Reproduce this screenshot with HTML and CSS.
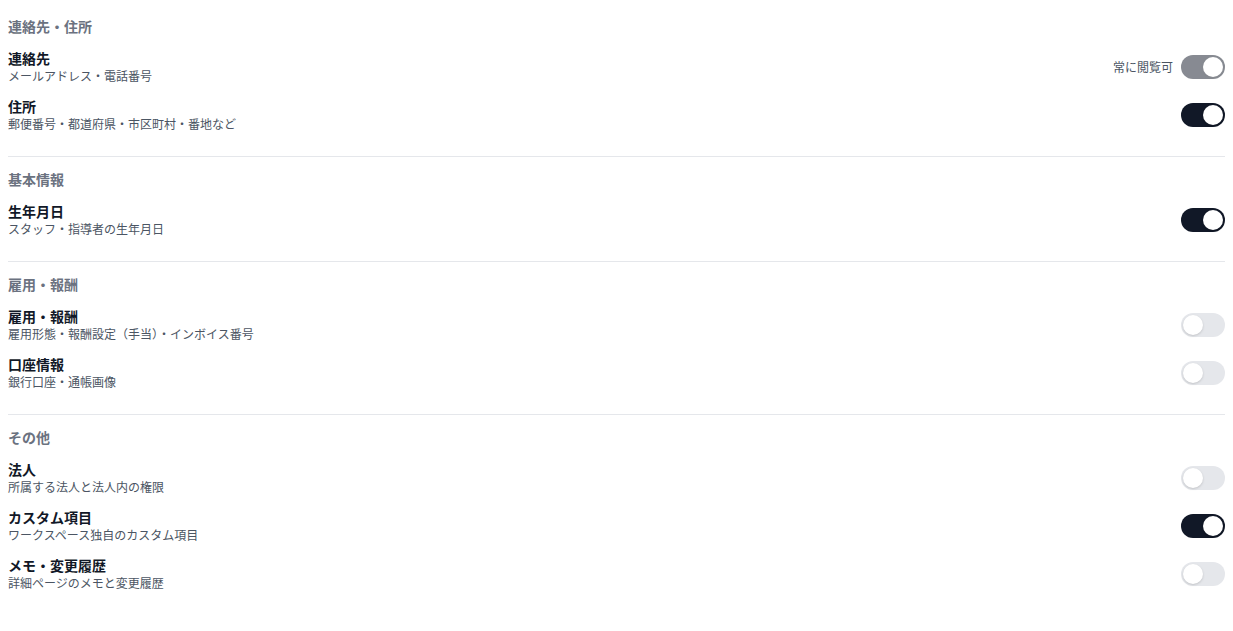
FILE: index.html
```html
<!DOCTYPE html>
<html lang="ja">
<head>
<meta charset="utf-8">
<link rel="stylesheet" href="styles.css">
</head>
<body>
<div class="page">
  <section class="section">
    <h3 class="section-title">連絡先・住所</h3>
    <div class="items">
      <div class="item">
        <div class="item-text"><div class="item-title">連絡先</div><div class="item-sub">メールアドレス・電話番号</div></div>
        <div class="item-ctrl"><span class="always">常に閲覧可</span><span class="toggle on disabled"><span class="knob"></span></span></div>
      </div>
      <div class="item">
        <div class="item-text"><div class="item-title">住所</div><div class="item-sub">郵便番号・都道府県・市区町村・番地など</div></div>
        <div class="item-ctrl"><span class="toggle on"><span class="knob"></span></span></div>
      </div>
    </div>
  </section>
  <section class="section">
    <h3 class="section-title">基本情報</h3>
    <div class="items">
      <div class="item">
        <div class="item-text"><div class="item-title">生年月日</div><div class="item-sub">スタッフ・指導者の生年月日</div></div>
        <div class="item-ctrl"><span class="toggle on"><span class="knob"></span></span></div>
      </div>
    </div>
  </section>
  <section class="section">
    <h3 class="section-title">雇用・報酬</h3>
    <div class="items">
      <div class="item">
        <div class="item-text"><div class="item-title">雇用・報酬</div><div class="item-sub">雇用形態・報酬設定（手当）・インボイス番号</div></div>
        <div class="item-ctrl"><span class="toggle"><span class="knob"></span></span></div>
      </div>
      <div class="item">
        <div class="item-text"><div class="item-title">口座情報</div><div class="item-sub">銀行口座・通帳画像</div></div>
        <div class="item-ctrl"><span class="toggle"><span class="knob"></span></span></div>
      </div>
    </div>
  </section>
  <section class="section last">
    <h3 class="section-title">その他</h3>
    <div class="items">
      <div class="item">
        <div class="item-text"><div class="item-title">法人</div><div class="item-sub">所属する法人と法人内の権限</div></div>
        <div class="item-ctrl"><span class="toggle"><span class="knob"></span></span></div>
      </div>
      <div class="item">
        <div class="item-text"><div class="item-title">カスタム項目</div><div class="item-sub">ワークスペース独自のカスタム項目</div></div>
        <div class="item-ctrl"><span class="toggle on"><span class="knob"></span></span></div>
      </div>
      <div class="item">
        <div class="item-text"><div class="item-title">メモ・変更履歴</div><div class="item-sub">詳細ページのメモと変更履歴</div></div>
        <div class="item-ctrl"><span class="toggle"><span class="knob"></span></span></div>
      </div>
    </div>
  </section>
  <div class="next-block">
    <h3 class="section-title">新規職員を登録する際のデフォルト設定の項目</h3>
  </div>
</div>
</body>
</html>
```

FILE: styles.css
```css
* { box-sizing: border-box; }
html, body { margin: 0; padding: 0; background: #fff; }
body {
  font-family: "Noto Sans CJK JP", "Noto Sans", sans-serif;
  color: #111827;
}
.page {
  padding: 16px 8px 0 8px;
}
.section {
  display: flex;
  flex-direction: column;
  gap: 12px;
  padding-bottom: 24px;
  border-bottom: 1px solid #e5e7eb;
  margin-bottom: 12px;
}
.section.last {
  border-bottom: none;
  margin-bottom: 0;
}
.section-title {
  margin: 0;
  font-size: 14px;
  line-height: 20px;
  font-weight: 600;
  color: #6b7280;
}
.items {
  display: flex;
  flex-direction: column;
  gap: 12px;
}
.item {
  display: flex;
  align-items: center;
  justify-content: space-between;
  height: 36px;
}
.item-title {
  font-size: 14px;
  line-height: 20px;
  font-weight: 700;
  color: #111827;
}
.item-sub {
  font-size: 12px;
  line-height: 16px;
  color: #4b5563;
}
.item-ctrl {
  display: flex;
  align-items: center;
  gap: 8px;
  margin-top: 1px;
}
.always {
  font-size: 12px;
  color: #4b5563;
}
.toggle {
  position: relative;
  display: inline-block;
  width: 44px;
  height: 24px;
  border-radius: 12px;
  background: #e5e7eb;
}
.toggle.on { background: #111827; }
.toggle.disabled { opacity: 0.5; }
.knob {
  position: absolute;
  top: 2px;
  left: 2px;
  width: 20px;
  height: 20px;
  border-radius: 50%;
  background: #fff;
  box-shadow: 0 1px 3px rgba(0,0,0,0.1), 0 1px 2px rgba(0,0,0,0.06);
}
.toggle.on .knob { left: 22px; }
.next-block {
  padding-top: 25px;
}
```
